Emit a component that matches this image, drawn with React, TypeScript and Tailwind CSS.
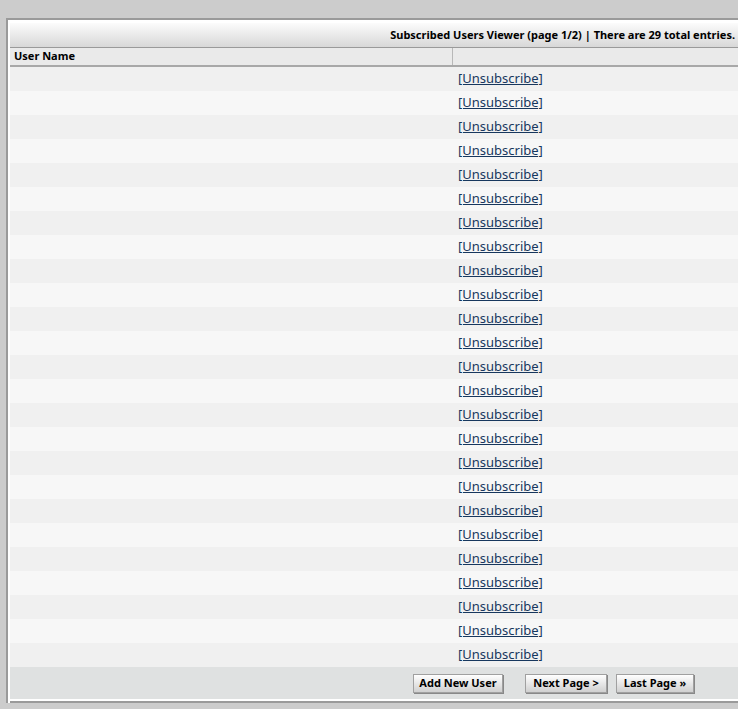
export default function App() {
  const rows = Array.from({ length: 25 });
  return (
    <div className="w-[738px] h-[709px] bg-[#cccccc] overflow-hidden pt-[18px] pl-[6px]">
      <div className="w-[760px] border-t-2 border-l-2 border-[#9a9a9a] bg-white pt-[3px] pl-[2px]">
        <div className="w-[754px] bg-[#dfe1e1]">
          <div className="h-[25px] pr-[29px] flex items-center justify-end border-b border-[#9a9a9a] bg-gradient-to-b from-[#fcfcfc] to-[#d8d8d8] text-[11px] font-bold text-black [font-family:'DejaVu_Sans_Condensed','DejaVu_Sans',sans-serif] whitespace-nowrap">
            Subscribed Users Viewer (page 1/2) | There are 29 total entries.
          </div>
          <div className="flex h-[19px] bg-[#eaeaea] border-b-2 border-[#a8a8a8] text-[11px] font-bold [font-family:'DejaVu_Sans_Condensed','DejaVu_Sans',sans-serif]">
            <div className="w-[443px] pl-[4px] flex items-center border-r border-[#b8b8b8]">User Name</div>
            <div className="flex-1" />
          </div>
          {rows.map((_, i) => (
            <div key={i} className={`flex h-[24px] ${i % 2 === 0 ? "bg-[#f0f0f0]" : "bg-[#f7f7f7]"}`}>
              <div className="w-[443px]" />
              <div className="pl-[5px] flex items-center">
                <a href="#" className="text-[#17375e] underline text-[13px] [font-family:'DejaVu_Sans',sans-serif]">[Unsubscribe]</a>
              </div>
            </div>
          ))}
          <div className="h-[32px] flex items-center pl-[403px] text-[11px] font-bold [font-family:'DejaVu_Sans_Condensed','DejaVu_Sans',sans-serif]">
            <button className="w-[90px] h-[19px] bg-gradient-to-b from-white to-[#d0d0d0] border border-[#a0a0a0] shadow-[1px_1px_0_#888]">Add New User</button>
            <button className="ml-[22px] w-[82px] h-[19px] bg-gradient-to-b from-white to-[#d0d0d0] border border-[#a0a0a0] shadow-[1px_1px_0_#888]">Next Page &gt;</button>
            <button className="ml-[9px] w-[78px] h-[19px] bg-gradient-to-b from-white to-[#d0d0d0] border border-[#a0a0a0] shadow-[1px_1px_0_#888]">Last Page »</button>
          </div>
        </div>
        <div className="h-[2px] bg-white" />
        <div className="h-[2px] bg-[#9a9a9a]" />
      </div>
    </div>
  );
}
